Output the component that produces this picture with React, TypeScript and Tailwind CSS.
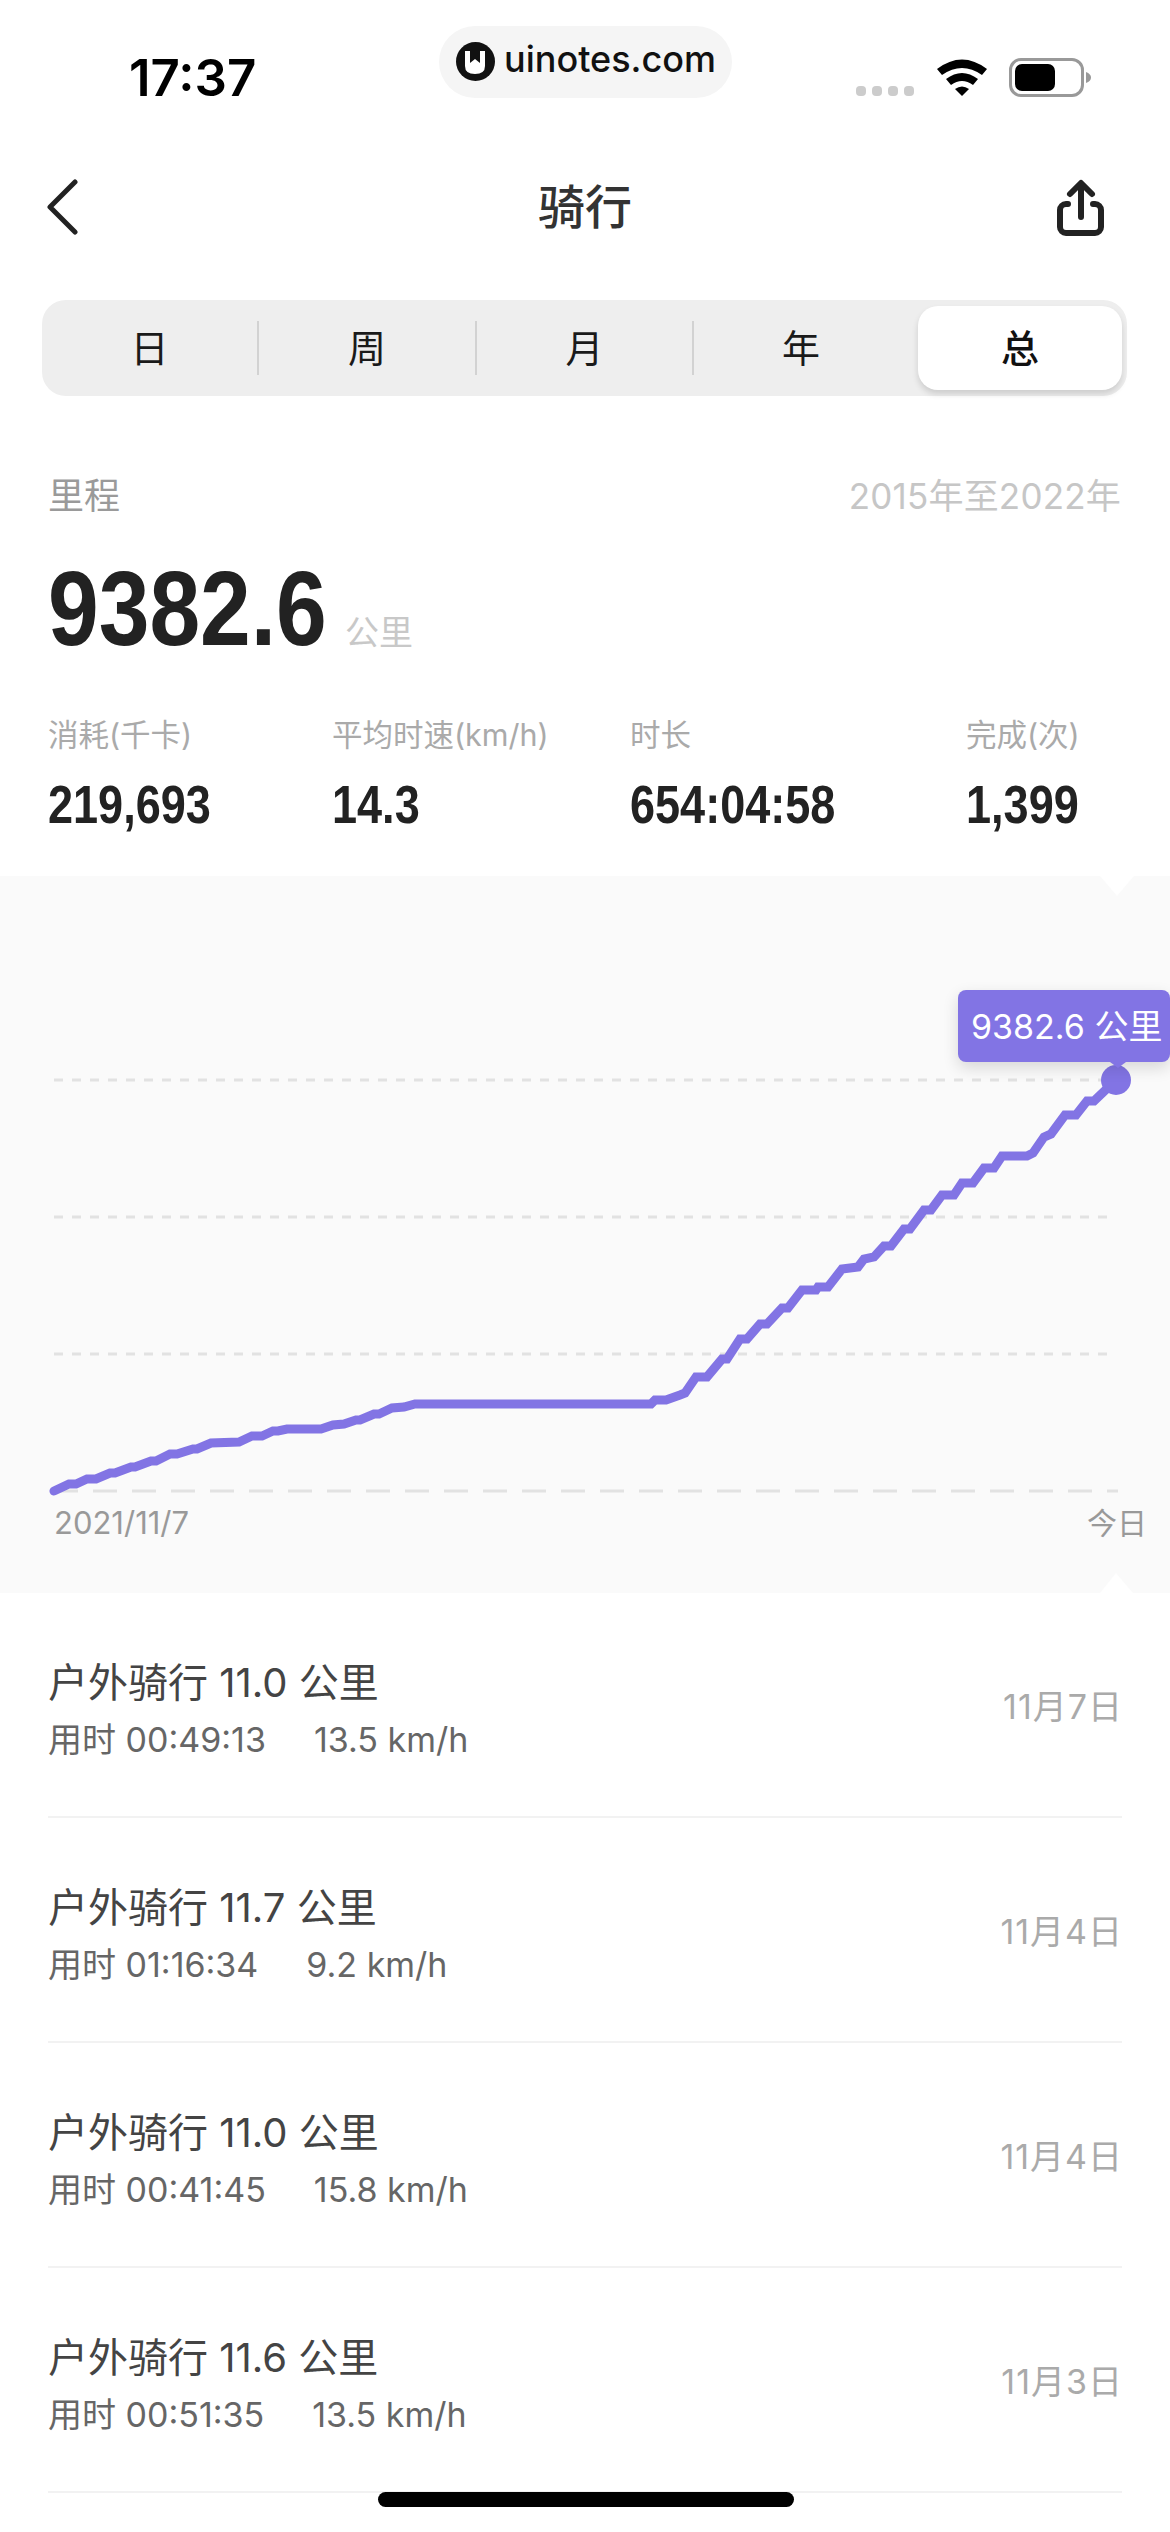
import React from "react";

const points =
  "54,1491 69,1484 76,1484 87,1479 96,1479 110,1473 115,1473 131,1467 135,1467 151,1461 156,1461 170,1454 177,1454 193,1449 197,1449 211,1443 239,1442 252,1436 262,1436 273,1431 278,1431 287,1429 321,1429 333,1425 344,1424 356,1420 360,1420 374,1414 379,1414 392,1408 404,1407 415,1404 651,1404 655,1400 666,1400 680,1395 685,1393 696,1377 707,1377 722,1359 727,1359 740,1339 747,1339 760,1324 767,1324 782,1308 788,1308 802,1290 816,1290 818,1287 828,1287 842,1269 858,1267 864,1259 874,1257 884,1246 891,1246 904,1229 910,1229 924,1210 931,1210 942,1195 954,1195 962,1183 973,1183 984,1168 994,1168 1002,1156 1027,1156 1033,1153 1044,1137 1051,1134 1065,1115 1076,1115 1087,1101 1094,1101 1116,1080";

const rows = [
  { km: "11.0", time: "00:49:13", speed: "13.5 km/h", date: "11月7日" },
  { km: "11.7", time: "01:16:34", speed: "9.2 km/h", date: "11月4日" },
  { km: "11.0", time: "00:41:45", speed: "15.8 km/h", date: "11月4日" },
  { km: "11.6", time: "00:51:35", speed: "13.5 km/h", date: "11月3日" },
];

const stats = [
  { label: "消耗(千卡)", value: "219,693" },
  { label: "平均时速(km/h)", value: "14.3" },
  { label: "时长", value: "654:04:58" },
  { label: "完成(次)", value: "1,399" },
];

function Divider() {
  return <div className="h-[54px] w-[2px] bg-[#d2d2d2]" />;
}

export default function App() {
  return (
    <div className="relative h-[2532px] w-[1170px] overflow-hidden bg-white font-['Inter','Noto_Sans_CJK_SC',sans-serif]">
      {/* status bar */}
      <div className="flex h-[157px] items-start">
        <div className="ml-[129px] mt-[55px] w-[125px] whitespace-nowrap text-[51px] font-semibold leading-[46px] text-black">17:37</div>
        <div className="ml-[185px] mt-[26px] flex h-[72px] w-[293px] items-center rounded-[36px] bg-[#f5f5f5] pl-[17px]">
          <svg width="39" height="39" viewBox="0 0 39 39" className="mb-[2px]">
            <circle cx="19.5" cy="19.5" r="19.5" fill="#111" />
            <path d="M9 9H14V21L19 17L24 21V9H29V24Q29 32 19 32Q9 32 9 24Z" fill="#fff" />
          </svg>
          <span className="mb-[6px] ml-[9px] text-[36px] font-medium leading-[44px] text-[#111]">uinotes.com</span>
        </div>
        <div className="ml-[124px] mt-[86px] flex gap-[6px]">
          <div className="h-[10px] w-[10px] rounded-[4px] bg-[#cccccc]" />
          <div className="h-[10px] w-[10px] rounded-[4px] bg-[#cccccc]" />
          <div className="h-[10px] w-[10px] rounded-[4px] bg-[#cccccc]" />
          <div className="h-[10px] w-[10px] rounded-[4px] bg-[#cccccc]" />
        </div>
        <svg width="50" height="37" viewBox="0 0 50 37" className="ml-[23px] mt-[59px]">
          <path d="M0 10Q25 -9 50 10L45 16Q25 2 5 16Z" fill="#000" />
          <path d="M9 20Q25 8 41 20L36 26Q25 18 14 26Z" fill="#000" />
          <path d="M18 30Q25 25 32 30L25 37Z" fill="#000" />
        </svg>
        <div className="ml-[22px] mt-[58px] flex items-center">
          <div className="flex h-[39px] w-[75px] items-center rounded-[12px] border-[3px] border-[#999999] pl-[3px]">
            <div className="h-[27px] w-[40px] rounded-[7px] bg-black" />
          </div>
          <svg width="5" height="11" viewBox="0 0 5 11" className="ml-[2px]">
            <path d="M0 0Q5 2 5 5.5Q5 9 0 11Z" fill="#999" />
          </svg>
        </div>
      </div>

      {/* nav */}
      <div className="grid h-[100px] grid-cols-[1fr_auto_1fr] items-center">
        <svg width="34" height="56" viewBox="0 0 34 56" className="ml-[46px]">
          <path d="M29 3L4 28L29 53" fill="none" stroke="#222" strokeWidth="5" strokeLinecap="round" strokeLinejoin="round" />
        </svg>
        <div className="text-[47px] font-medium leading-[60px] text-[#333333]">骑行</div>
        <svg width="60" height="70" viewBox="0 0 60 70" className="mb-[-2px] mr-[59px] justify-self-end">
          <path d="M17 31H15a6 6 0 0 0-6 6V54a6 6 0 0 0 6 6H44a6 6 0 0 0 6-6V37a6 6 0 0 0-6-6H42" fill="none" stroke="#222" strokeWidth="6" strokeLinecap="round" />
          <path d="M30 11V44M19 21L30 10L41 21" fill="none" stroke="#222" strokeWidth="6" strokeLinecap="round" strokeLinejoin="round" />
        </svg>
      </div>

      {/* segmented control */}
      <div className="ml-[42px] mt-[43px] flex h-[96px] w-[1085px] items-center rounded-[24px] bg-[#eeeeee] pr-[5px] text-[38px] leading-[44px] text-[#1a1a1a]">
        <div className="w-[215px] text-center">日</div>
        <Divider />
        <div className="w-[216px] text-center">周</div>
        <Divider />
        <div className="w-[215px] text-center">月</div>
        <Divider />
        <div className="w-[214px] text-center">年</div>
        <div className="ml-[10px] flex h-[84px] w-[204px] items-center justify-center rounded-[20px] bg-white font-medium text-[#111] shadow-[0_4px_6px_rgba(0,0,0,0.14)]">
          总
        </div>
      </div>

      {/* summary */}
      <div className="mt-[78px] flex items-center justify-between pl-[48px] pr-[49px]">
        <div className="text-[36px] leading-[44px] text-[#9a9a9a]">里程</div>
        <div className="text-[35px] leading-[44px] tracking-[0.2px] text-[#c6c6c6]">2015年至2022年</div>
      </div>
      <div className="ml-[48px] mt-[38px] flex items-baseline">
        <span className="inline-block w-[279px] origin-left scale-x-[0.86] whitespace-nowrap font-['Liberation_Sans',sans-serif] text-[106px] font-bold leading-[104px] text-[#222222]">9382.6</span>
        <span className="ml-[18px] text-[34px] text-[#c8c8c8]">公里</span>
      </div>
      <div className="ml-[48px] mt-[55px] grid grid-cols-[284px_298px_336px_auto]">
        {stats.map((s) => (
          <div key={s.label}>
            <div className="text-[30.5px] leading-[40px] text-[#aaaaaa]">{s.label}</div>
            <div className="mt-[24px] origin-left scale-x-[0.85] whitespace-nowrap font-['Liberation_Sans',sans-serif] text-[53px] font-bold leading-[52px] text-[#222222]">{s.value}</div>
          </div>
        ))}
      </div>

      {/* chart */}
      <div className="relative mt-[45px] h-[717px] bg-[#fafafa]">
        <svg width="1170" height="717" viewBox="0 876 1170 717" className="block">
          <polygon points="1100,876 1134,876 1117,896" fill="#fff" />
          <polygon points="1100,1593 1133,1593 1116,1573" fill="#fff" />
          <g stroke="#e2e2e2" strokeWidth="3" strokeDasharray="9 9">
            <line x1="54" y1="1080" x2="1108" y2="1080" />
            <line x1="54" y1="1217" x2="1108" y2="1217" />
            <line x1="54" y1="1354" x2="1108" y2="1354" />
          </g>
          <line x1="54" y1="1491" x2="1118" y2="1491" stroke="#e2e2e2" strokeWidth="3" strokeDasharray="24 15" />
          <polyline points={points} fill="none" stroke="#8274e4" strokeWidth="9" strokeLinecap="round" strokeLinejoin="miter" />
          <circle cx="1116" cy="1080" r="15" fill="#8274e4" />
          <text x="54" y="1534" fontSize="31" fill="#999999">2021/11/7</text>
          <text x="1087" y="1534" fontSize="30" fill="#999999">今日</text>
        </svg>
        <div className="absolute right-0 top-[114px] flex h-[72px] w-[212px] items-center rounded-[8px] bg-[#8274e4] pl-[13px] text-[34px] whitespace-nowrap text-white shadow-[0_6px_16px_rgba(0,0,0,0.14)]">
          9382.6 公里
          <div className="absolute left-[152px] top-[72px] h-0 w-0 border-x-[8px] border-t-[6px] border-x-transparent border-t-[#8274e4]" />
        </div>
      </div>

      {/* list */}
      <div className="mx-[48px]">
        {rows.map((r, i) => (
          <div key={i} className="flex h-[225px] justify-between border-b-[2px] border-[#f2f2f2] pt-[66px]">
            <div>
              <div className="text-[40px] leading-[48px] text-[#444444]">户外骑行 {r.km} 公里</div>
              <div className="mt-[11px] flex text-[34px] leading-[44px] text-[#666666]">
                <span>用时 {r.time}</span>
                <span className="ml-[48px]">{r.speed}</span>
              </div>
            </div>
            <div className="mr-[-1px] mt-[26px] text-[34px] leading-[44px] tracking-[1px] text-[#aaaaaa]">{r.date}</div>
          </div>
        ))}
      </div>

      {/* home indicator */}
      <div className="absolute left-[378px] top-[2492px] h-[15px] w-[416px] rounded-full bg-black" />
    </div>
  );
}
